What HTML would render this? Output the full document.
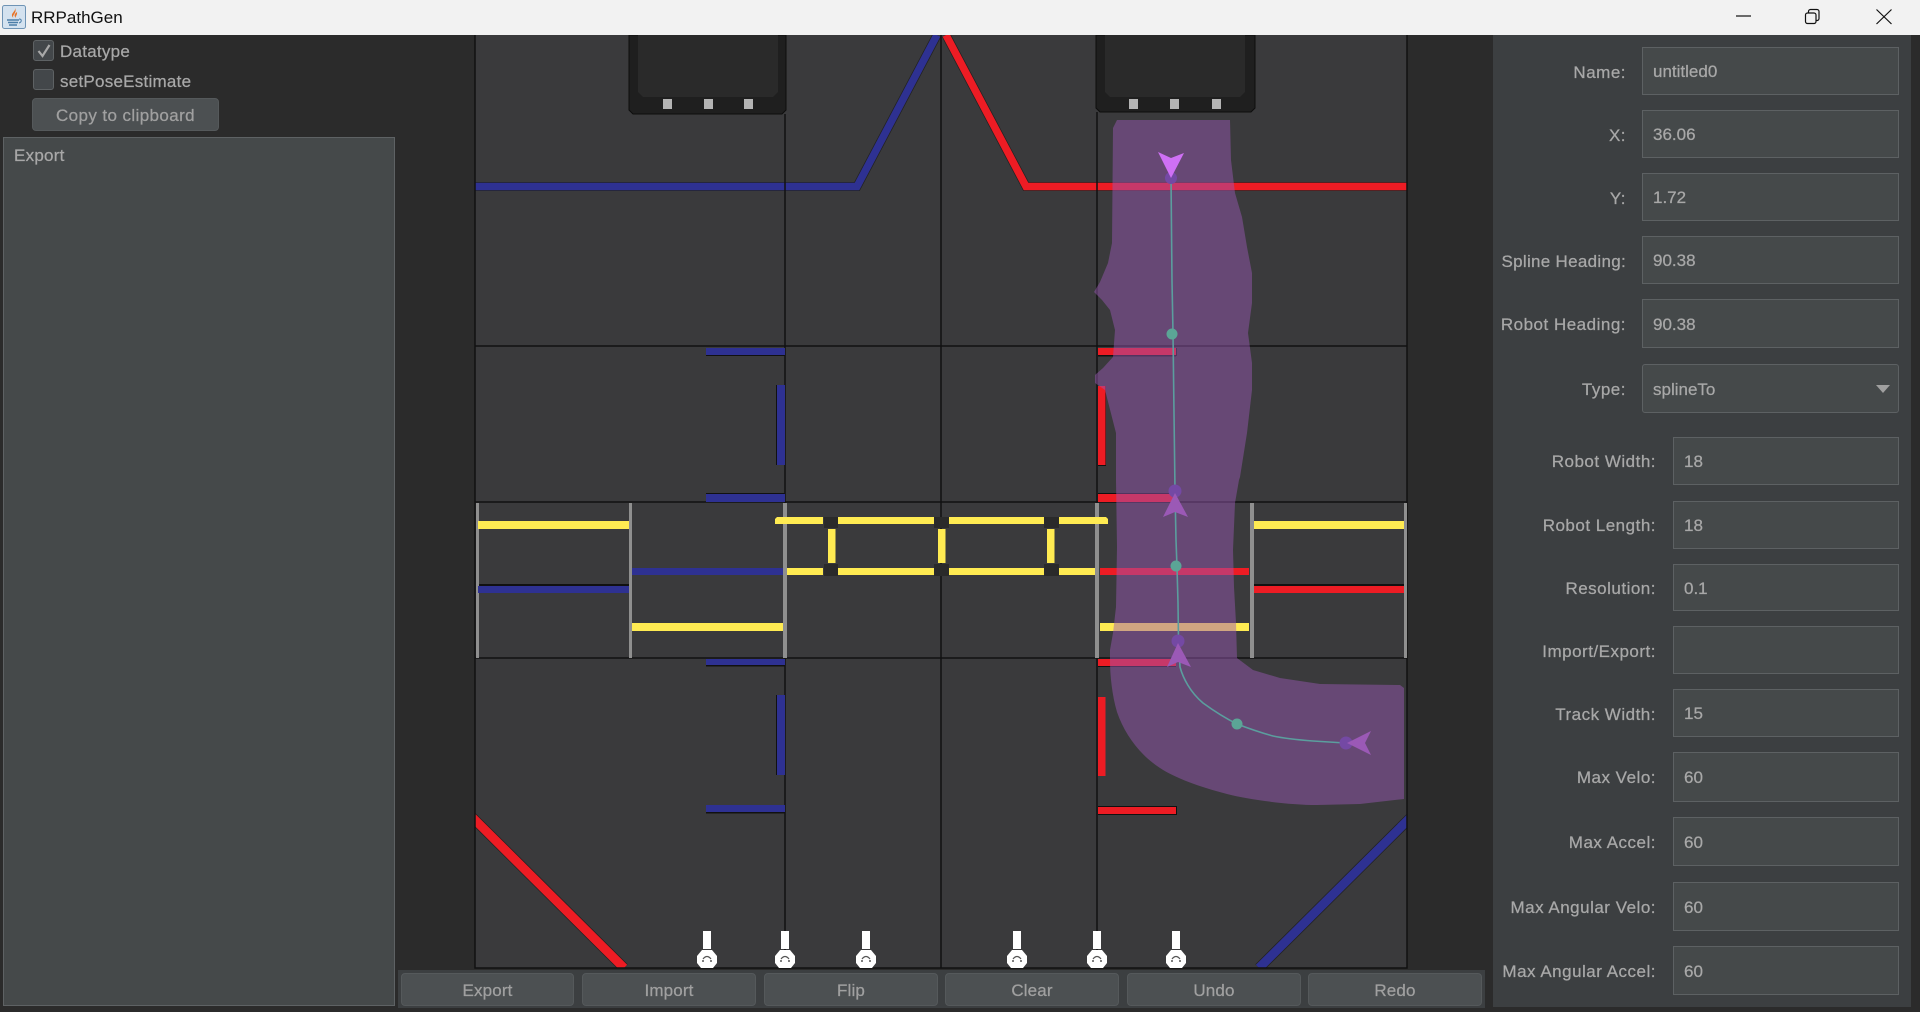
<!DOCTYPE html>
<html>
<head>
<meta charset="utf-8">
<title>RRPathGen</title>
<style>
html,body{margin:0;padding:0;width:1920px;height:1012px;overflow:hidden;background:#2b2b2b;}
body{position:relative;font-family:"Liberation Sans",sans-serif;font-size:17px;color:#a8a8a8;-webkit-text-stroke:.25px currentColor;}
.a{position:absolute;box-sizing:border-box;}
.tb{left:0;top:0;width:1920px;height:35px;background:#f2f2f2;z-index:5;}
.tt{left:31px;top:7px;font-size:17px;line-height:21px;color:#111;-webkit-text-stroke:0;}
.panel{left:1493px;top:35px;width:418px;height:972px;background:#3c3f41;}
.strip{left:398px;top:970px;width:1087px;height:38px;background:#3c3f41;}
.f{background:#45494a;border:1.5px solid #5d6163;line-height:20px;color:#a8a8a8;white-space:nowrap;padding:2px 0 0 10px;display:flex;align-items:center;}
.l{text-align:right;line-height:20px;white-space:nowrap;color:#a8a8a8;letter-spacing:.5px;margin-top:1px;}
.b{background:#4c5052;border:1.5px solid #55595b;border-radius:4px;text-align:center;color:#a0a0a0;line-height:34px;letter-spacing:.15px;}
.c{background:#43474a;border:1.5px solid #5e6264;border-radius:3px;width:21px;height:21px;left:33px;}
.t{white-space:nowrap;line-height:20px;letter-spacing:.25px;}
</style>
</head>
<body>
<div class="a tb"></div>
<svg class="a" style="left:2px;top:5px;z-index:6" width="24" height="24" viewBox="0 0 24 24">
<rect x=".5" y=".5" width="23" height="23" rx="2" fill="#d4e2ef" stroke="#6f94b5"/>
<path d="M13 3c1 3-4 5-3 8 .4 1 1 1.600 1.500 2-2-3 4-5 1.500-10z" fill="#e8752a"/>
<path d="M15 7c-2 1.500-3 2.500-2 5l.5 1c0-2 2-3 1.500-6z" fill="#e8752a"/>
<path d="M5 15h12M6 17.500h10M7 20h8" stroke="#4c7ea8" stroke-width="1.500" fill="none"/>
<path d="M17 14c3 0 3 3 0 4" stroke="#4c7ea8" fill="none"/>
</svg>
<div class="a tt" style="z-index:6">RRPathGen</div>
<svg class="a" style="left:1730px;top:0;z-index:6" width="180" height="35" viewBox="1730 0 180 35" fill="none" stroke="#111" stroke-width="1.200">
<path d="M1736 16h15"/>
<rect x="1805.500" y="13" width="10.500" height="10.500" rx="2"/>
<path d="M1808.500 13v-1.500a2 2 0 0 1 2-2h6.500a2 2 0 0 1 2 2v7a2 2 0 0 1-2 2h-1"/>
<path d="M1876.500 9.500l15 14.500M1891.500 9.500l-15 14.500"/>
</svg>

<!-- left panel -->
<div class="a c" style="top:40px"></div>
<svg class="a" style="left:36px;top:43px" width="16" height="16" viewBox="0 0 16 16"><path d="M2.500 8l4 5L13.500 2" fill="none" stroke="#a8a8a8" stroke-width="2.200"/></svg>
<div class="a t" style="left:60px;top:42px">Datatype</div>
<div class="a c" style="top:69px"></div>
<div class="a t" style="left:60px;top:72px">setPoseEstimate</div>
<div class="a b" style="left:32px;top:98px;width:187px;height:33px;letter-spacing:.4px">Copy to clipboard</div>
<div class="a" style="left:3px;top:137px;width:392px;height:869px;background:#45494a;border:1.5px solid #5e6264"></div>
<div class="a t" style="left:14px;top:146px">Export</div>

<!-- bottom strip -->
<div class="a strip"></div>
<div class="a b" style="left:401px;top:973px;width:173px;height:33px">Export</div>
<div class="a b" style="left:582px;top:973px;width:174px;height:33px">Import</div>
<div class="a b" style="left:764px;top:973px;width:174px;height:33px">Flip</div>
<div class="a b" style="left:945px;top:973px;width:174px;height:33px">Clear</div>
<div class="a b" style="left:1127px;top:973px;width:174px;height:33px">Undo</div>
<div class="a b" style="left:1308px;top:973px;width:174px;height:33px">Redo</div>

<!-- field -->
<svg class="a" style="left:0;top:0" width="1920" height="1012" viewBox="0 0 1920 1012">
<defs>
<clipPath id="fc"><rect x="475" y="35" width="932" height="933"/></clipPath>
<g id="m">
<rect x="-4" y="931" width="8" height="18" fill="#fff"/>
<path d="M-5 950H5L10 956V963L6 968H-6L-10 963V956Z" fill="#fff"/>
<path d="M-4 959Q0 954 4 959" fill="none" stroke="#555" stroke-width="1.200"/>
<path d="M-5 961h2M3 961h2" stroke="#555" stroke-width="1.400"/>
</g>
</defs>
<rect x="475" y="35" width="932" height="933" fill="#3a3a3c"/>
<!-- backdrops -->
<g>
<path d="M629 35H786V110L782 114H633L629 110Z" fill="#1f1f1f" stroke="#0d0d0d"/>
<path d="M638 35H778V92L773 97H643L638 92Z" fill="#2a2a2a"/>
<path d="M1096 35H1255V108L1251 112H1100L1096 108Z" fill="#1f1f1f" stroke="#0d0d0d"/>
<path d="M1105 35H1245V92L1240 97H1110L1105 92Z" fill="#2a2a2a"/>
<g fill="#b4b4b4">
<rect x="663" y="99" width="9" height="10"/><rect x="704" y="99" width="9" height="10"/><rect x="744" y="99" width="9" height="10"/>
<rect x="1129" y="99" width="9" height="10"/><rect x="1170" y="99" width="9" height="10"/><rect x="1212" y="99" width="9" height="10"/>
</g>
</g>
<!-- diagonals -->
<g fill="none" stroke-linejoin="miter" clip-path="url(#fc)">
<path d="M470 186.500H857L937 35" stroke="#222" stroke-width="9"/>
<path d="M470 186.500H857L937 35" stroke="#2e3192" stroke-width="7.500"/>
<path d="M1407 186.500H1026L946 35" stroke="#222" stroke-width="9"/>
<path d="M1407 186.500H1026L946 35" stroke="#ed1c24" stroke-width="7.500"/>
<path d="M470 815L624 968" stroke="#222" stroke-width="10.500"/>
<path d="M470 815L624 968" stroke="#ed1c24" stroke-width="9"/>
<path d="M1412 816L1259 968" stroke="#222" stroke-width="10.500"/>
<path d="M1412 816L1259 968" stroke="#2e3192" stroke-width="9"/>
</g>
<!-- grid -->
<g stroke="#111" stroke-width="1.500" fill="none">
<path d="M475 35V968H1407V35M785 114V968M941 35V968M1097 112V968M475 346H1407M475 502H1407M475 658H1407"/>
</g>
<!-- wall shadows -->
<g fill="#111">
<rect x="706" y="355" width="79" height="1"/>
<rect x="776" y="385" width="1" height="80"/>
<rect x="706" y="493" width="79" height="1"/>
<rect x="706" y="665" width="79" height="1.500"/>
<rect x="776" y="695" width="1" height="80"/>
<rect x="706" y="812" width="79" height="1.500"/>
<rect x="1098" y="355" width="78" height="1.500"/>
<rect x="1176" y="348" width="1" height="8"/>
<rect x="1105" y="386" width="1" height="80"/>
<rect x="1098" y="465" width="8" height="1"/>
<rect x="1098" y="493" width="78" height="1"/>
<rect x="1098" y="666" width="78" height="1"/>
<rect x="1098" y="806" width="78" height="1"/>
<rect x="1098" y="814" width="78" height="1"/>
<rect x="1176" y="806" width="1" height="9"/>
</g>
<!-- blue walls -->
<g fill="#2e3192">
<rect x="706" y="348" width="79" height="7"/>
<rect x="777" y="385" width="8" height="80"/>
<rect x="706" y="494" width="79" height="8"/>
<rect x="706" y="659" width="79" height="6"/>
<rect x="777" y="695" width="8" height="80"/>
<rect x="706" y="805" width="79" height="7"/>
</g>
<!-- red walls -->
<g fill="#ed1c24">
<rect x="1098" y="348" width="78" height="7"/>
<rect x="1098" y="386" width="7.500" height="79"/>
<rect x="1098" y="494" width="78" height="8"/>
<rect x="1098" y="659" width="78" height="7"/>
<rect x="1098" y="697" width="7.500" height="79"/>
<rect x="1098" y="807" width="78" height="7"/>
</g>
<!-- middle row -->
<rect x="478" y="584" width="151" height="2" fill="#111"/>
<rect x="1254" y="584" width="150" height="2" fill="#111"/>
<g fill="#8f8f8f">
<rect x="476" y="503" width="3" height="155"/>
<rect x="629" y="503" width="3" height="155"/>
<rect x="783" y="503" width="4" height="155"/>
<rect x="1095" y="503" width="4" height="155"/>
<rect x="1250" y="503" width="4" height="155"/>
<rect x="1404" y="503" width="3" height="155"/>
</g>
<g fill="#2e3192">
<rect x="478" y="586" width="151" height="7"/>
<rect x="632" y="568" width="151" height="7"/>
</g>
<g fill="#ed1c24">
<rect x="1254" y="586" width="150" height="7"/>
<rect x="1100" y="568" width="149" height="7"/>
</g>
<g fill="#2a2a2a">
<rect x="824" y="517" width="14" height="11"/><rect x="934" y="517" width="15" height="11"/><rect x="1044" y="517" width="15" height="11"/>
<rect x="824" y="564" width="14" height="12"/><rect x="934" y="564" width="15" height="12"/><rect x="1044" y="564" width="15" height="12"/>
</g>
<g fill="#ffeb52">
<rect x="478" y="521" width="151" height="8"/>
<rect x="632" y="623" width="151" height="8"/>
<rect x="1254" y="521" width="150" height="8"/>
<rect x="1100" y="623" width="149" height="8"/>
<path d="M775 524V519L777 517H823V524Z"/>
<rect x="838" y="517" width="96" height="7"/>
<rect x="949" y="517" width="95" height="7"/>
<path d="M1059 517H1106L1108 519V524H1059Z"/>
<rect x="787" y="568" width="36" height="7"/>
<rect x="838" y="568" width="96" height="7"/>
<rect x="949" y="568" width="95" height="7"/>
<rect x="1059" y="568" width="36" height="7"/>
<rect x="828" y="529" width="7.500" height="34"/>
<rect x="938" y="529" width="7.500" height="34"/>
<rect x="1047" y="529" width="7.500" height="34"/>
</g>
<!-- robot markers -->
<use href="#m" x="707"/><use href="#m" x="785"/><use href="#m" x="866"/>
<use href="#m" x="1017"/><use href="#m" x="1097"/><use href="#m" x="1176"/>
<!-- robot sweep -->
<path d="M1113 128L1117 120H1230L1231 160L1235 193L1242 217L1247 247L1252 273L1252 303L1248 333L1252 363L1252 390L1247 433L1240 477L1239 480L1235 503L1233 550L1234 587L1236 623L1237 658L1253 670L1280 678L1320 684L1400 685L1404 688L1404 799L1360 804L1317 805C1290 805 1250 800 1227 794C1200 787 1175 778 1160 768C1140 755 1125 735 1117 712C1112 695 1110 675 1110 660L1110 650L1113 633L1116 607L1117 547L1116 480L1116 433L1105 390L1095 383L1095 375L1103 368L1113 357L1115 330L1110 310L1102 300L1094 292L1100 282L1108 263L1112 243Z" fill="#9b59b6" fill-opacity=".47"/>
<!-- spline -->
<path d="M1171 178L1172 281L1173 333L1174 413L1175 490L1176 540L1177 567L1178 603L1178.500 640L1180 667C1183 678 1190 692 1203 703C1214 711 1225 718 1237 724C1250 729 1262 733 1273 736C1287 739 1300 740 1313 741L1345 743" fill="none" stroke="#5b9e9e" stroke-width="1.600"/>
<g fill="#5ba596">
<circle cx="1172" cy="334" r="5.500"/><circle cx="1176" cy="566" r="5.500"/><circle cx="1237" cy="724" r="5.500"/>
</g>
<g fill="#7449a4">
<circle cx="1171" cy="178" r="6"/><circle cx="1175" cy="491" r="6.500"/><circle cx="1178" cy="641" r="6.500"/><circle cx="1346" cy="743" r="6.500"/>
</g>
<path d="M1158 152L1171 158L1184 153L1171 178Z" fill="#cf70f5"/>
<g fill="#9b59b6">
<path d="M1175 493L1163 517L1175 512L1188 517Z"/>
<path d="M1178 643L1167 667L1178 662L1191 667Z"/>
<path d="M1347 743L1371 731L1365 743L1371 755Z"/>
</g>
</svg>

<!-- right panel -->
<div class="a panel"></div>
<div class="a l" style="left:1493px;width:133px;top:62px">Name:</div>
<div class="a f" style="left:1642px;top:47px;width:257px;height:48px">untitled0</div>
<div class="a l" style="left:1493px;width:133px;top:125px">X:</div>
<div class="a f" style="left:1642px;top:110px;width:257px;height:48px">36.06</div>
<div class="a l" style="left:1493px;width:133px;top:188px">Y:</div>
<div class="a f" style="left:1642px;top:173px;width:257px;height:48px">1.72</div>
<div class="a l" style="left:1493px;width:133px;top:251px;letter-spacing:.3px">Spline Heading:</div>
<div class="a f" style="left:1642px;top:236px;width:257px;height:48px">90.38</div>
<div class="a l" style="left:1493px;width:133px;top:314px">Robot Heading:</div>
<div class="a f" style="left:1642px;top:299px;width:257px;height:49px">90.38</div>
<div class="a l" style="left:1493px;width:133px;top:379px">Type:</div>
<div class="a f" style="left:1642px;top:364px;width:257px;height:49px;border-radius:3px">splineTo</div>
<svg class="a" style="left:1876px;top:385px" width="14" height="9" viewBox="0 0 14 9"><path d="M0 0H14L7 8Z" fill="#a0a0a0"/></svg>
<div class="a l" style="left:1493px;width:163px;top:451px">Robot Width:</div>
<div class="a f" style="left:1673px;top:437px;width:226px;height:48px">18</div>
<div class="a l" style="left:1493px;width:163px;top:515px">Robot Length:</div>
<div class="a f" style="left:1673px;top:501px;width:226px;height:48px">18</div>
<div class="a l" style="left:1493px;width:163px;top:578px">Resolution:</div>
<div class="a f" style="left:1673px;top:564px;width:226px;height:47px">0.1</div>
<div class="a l" style="left:1493px;width:163px;top:641px">Import/Export:</div>
<div class="a f" style="left:1673px;top:626px;width:226px;height:48px"></div>
<div class="a l" style="left:1493px;width:163px;top:704px">Track Width:</div>
<div class="a f" style="left:1673px;top:689px;width:226px;height:48px">15</div>
<div class="a l" style="left:1493px;width:163px;top:767px">Max Velo:</div>
<div class="a f" style="left:1673px;top:752px;width:226px;height:50px">60</div>
<div class="a l" style="left:1493px;width:163px;top:832px">Max Accel:</div>
<div class="a f" style="left:1673px;top:817px;width:226px;height:49px">60</div>
<div class="a l" style="left:1493px;width:163px;top:897px">Max Angular Velo:</div>
<div class="a f" style="left:1673px;top:882px;width:226px;height:49px">60</div>
<div class="a l" style="left:1493px;width:163px;top:961px">Max Angular Accel:</div>
<div class="a f" style="left:1673px;top:946px;width:226px;height:49px">60</div>
</body>
</html>
